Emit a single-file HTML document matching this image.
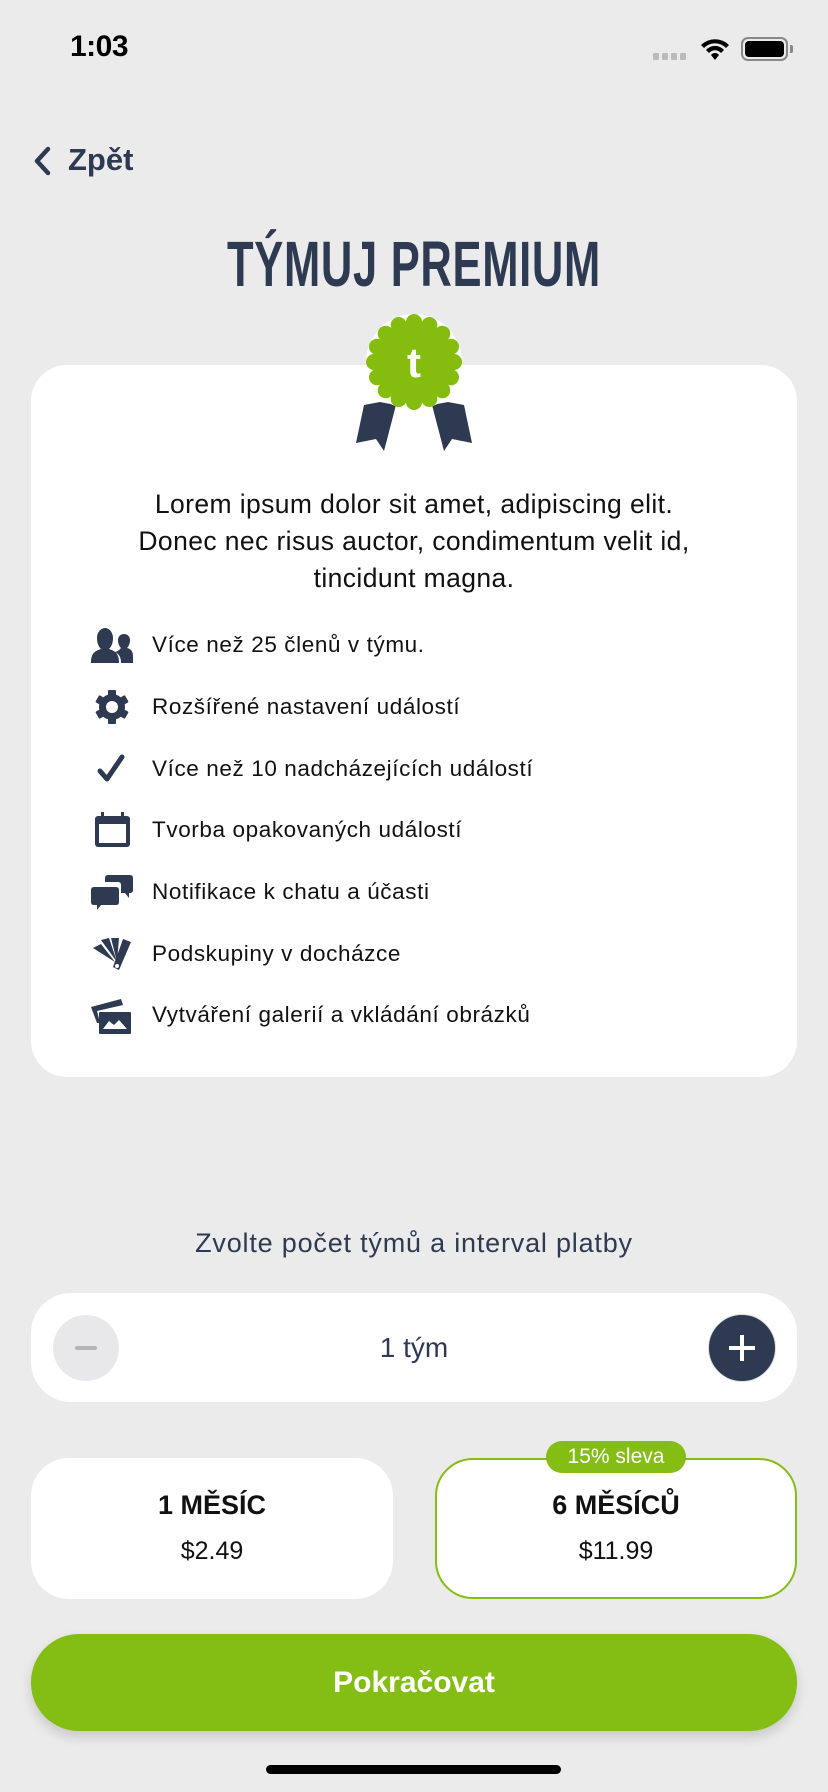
<!DOCTYPE html>
<html><head><meta charset="utf-8"><style>
*{margin:0;padding:0;box-sizing:border-box}
body{width:828px;height:1792px;background:#ebebeb;position:relative;overflow:hidden;font-family:"Liberation Sans",sans-serif;color:#000}
.abs{position:absolute}
.c{text-align:center}
.card{background:#fff;position:absolute}
.row{position:absolute;left:91px;height:40px;display:flex;align-items:center}
.row svg{width:42px;height:40px;flex:none}
.row span{margin-left:19px;font-size:22.5px;letter-spacing:0.6px;color:#111}
</style></head><body>
<div class="abs" style="left:70px;top:30px;font-size:30px;font-weight:bold;letter-spacing:-0.5px">1:03</div>
<div class="abs" style="left:653px;top:53px;display:flex;gap:3px"><i style="width:6px;height:7px;background:#bbb;border-radius:1px"></i><i style="width:6px;height:7px;background:#bbb;border-radius:1px"></i><i style="width:6px;height:7px;background:#bbb;border-radius:1px"></i><i style="width:6px;height:7px;background:#bbb;border-radius:1px"></i></div>
<svg class="abs" style="left:699px;top:36px" width="32" height="26" viewBox="0 0 32 26"><path d="M2 9a20 20 0 0 1 28 0l-3 3a15 15 0 0 0-22 0z M7 14a12 12 0 0 1 18 0l-3 3a8 8 0 0 0-12 0z M12 19a5 5 0 0 1 8 0l-4 5z" fill="#000"/></svg>
<div class="abs" style="left:741px;top:37px;width:47px;height:24px;border:2px solid #888;border-radius:7px;padding:2px"><div style="width:100%;height:100%;background:#000;border-radius:4px"></div></div>
<div class="abs" style="left:790px;top:45px;width:3px;height:8px;background:#888;border-radius:0 2px 2px 0"></div>

<svg class="abs" style="left:32px;top:146px" width="22" height="30" viewBox="0 0 22 30"><path d="M16 3 5 15l11 12" stroke="#2e3a52" stroke-width="4.5" fill="none" stroke-linecap="round" stroke-linejoin="round"/></svg>
<div class="abs" style="left:68px;top:142px;font-size:31px;font-weight:bold;color:#2e3a52">Zpět</div>

<div class="abs c" style="left:0;width:828px;top:228px;font-size:64px;font-weight:bold;color:#2e3a52;transform:scaleX(0.68);letter-spacing:1px;line-height:72px">TÝMUJ PREMIUM</div>

<div class="card" style="left:31px;top:365px;width:766px;height:712px;border-radius:36px"></div>

<svg class="abs" style="left:350px;top:305px" width="128" height="150" viewBox="0 0 128 150">
<path d="M14 100 30 97 46 100 34 146 26 134 6 138z" fill="#2e3a52"/>
<path d="M114 100 98 97 82 100 94 146 102 134 122 138z" fill="#2e3a52"/>
<circle cx="64" cy="57" r="48" fill="#fff"/>
<g fill="#84bd0e">
<circle cx="64" cy="57" r="38"/>
<circle cx="64" cy="17" r="8"/><circle cx="79.3" cy="20" r="8"/><circle cx="92.3" cy="28.7" r="8"/><circle cx="101" cy="41.7" r="8"/><circle cx="104" cy="57" r="8"/><circle cx="101" cy="72.3" r="8"/><circle cx="92.3" cy="85.3" r="8"/><circle cx="79.3" cy="94" r="8"/><circle cx="64" cy="97" r="8"/><circle cx="48.7" cy="94" r="8"/><circle cx="35.7" cy="85.3" r="8"/><circle cx="27" cy="72.3" r="8"/><circle cx="24" cy="57" r="8"/><circle cx="27" cy="41.7" r="8"/><circle cx="35.7" cy="28.7" r="8"/><circle cx="48.7" cy="20" r="8"/>
</g>
<text x="64" y="72" text-anchor="middle" font-family="Liberation Sans" font-weight="bold" font-size="42" fill="#fff">t</text>
</svg>

<div class="abs c" style="left:31px;width:766px;top:486px;font-size:26.5px;letter-spacing:0.4px;line-height:37px;color:#111">Lorem ipsum dolor sit amet, adipiscing elit.<br>Donec nec risus auctor, condimentum velit id,<br>tincidunt magna.</div>

<div class="row" style="top:625px"><svg viewBox="0 0 42 40"><path d="M0 38c0-10 4-12 10-14 -3-3-4-7-4-11 0-6 4-10 8-10s8 4 8 10c0 4-1 8-4 11 6 2 10 4 10 14z" fill="#2e3a52"/><path d="M30 38c0-6-2-9-6-11 4-1 5-3 6-4-2-2-3-5-3-8 0-4 3-6 6-6s6 2 6 6c0 3-1 6-3 8 4 1 6 3 6 9v6z" fill="#2e3a52"/></svg><span>Více než 25 členů v týmu.</span></div>
<div class="row" style="top:687px"><svg viewBox="0 0 42 40"><g transform="translate(21 20)" fill="#2e3a52"><circle r="13"/><rect x="-4" y="-17" width="8" height="34" rx="1"/><rect x="-4" y="-17" width="8" height="34" rx="1" transform="rotate(60)"/><rect x="-4" y="-17" width="8" height="34" rx="1" transform="rotate(120)"/></g><circle cx="21" cy="20" r="6" fill="#fff"/></svg><span>Rozšířené nastavení událostí</span></div>
<div class="row" style="top:749px"><svg viewBox="0 0 42 40"><path d="M9 22l7 8L31 8" stroke="#2e3a52" stroke-width="5" fill="none" stroke-linecap="round" stroke-linejoin="round"/></svg><span>Více než 10 nadcházejících událostí</span></div>
<div class="row" style="top:810px"><svg viewBox="0 0 42 40"><rect x="4" y="6" width="35" height="31" rx="3" fill="#2e3a52"/><rect x="8" y="14" width="27" height="19" fill="#fff"/><rect x="10" y="2" width="3" height="7" fill="#2e3a52"/><rect x="30" y="2" width="3" height="7" fill="#2e3a52"/></svg><span>Tvorba opakovaných událostí</span></div>
<div class="row" style="top:872px"><svg viewBox="0 0 42 40"><path d="M0 18q0-3 3-3h22q3 0 3 3v12q0 3-3 3H10l-4 5v-5H3q-3 0-3-3z" fill="#2e3a52"/><path d="M14 6q0-3 3-3h22q3 0 3 3v12q0 3-3 3h-1v5l-4-5h-4v-8q0-3-3-3H14z" fill="#2e3a52"/></svg><span>Notifikace k chatu a účasti</span></div>
<div class="row" style="top:934px"><svg viewBox="0 0 42 40"><path d="M2 14l8-4 14 18z M10 6l8-2 8 24z M20 4h8l-2 24z M32 5l8 3-12 28-6-3z" fill="#2e3a52"/><circle cx="26" cy="32" r="2" fill="#fff"/></svg><span>Podskupiny v docházce</span></div>
<div class="row" style="top:995px"><svg viewBox="0 0 42 40"><path d="M0 12l30-8 2 6L6 16l3 12H6z" fill="#2e3a52"/><rect x="8" y="17" width="32" height="22" rx="1" fill="#2e3a52"/><path d="M12 34l6-8 5 4 5-5 8 9z" fill="#fff"/></svg><span>Vytváření galerií a vkládání obrázků</span></div>

<div class="abs c" style="left:0;width:828px;top:1228px;font-size:27px;letter-spacing:0.8px;color:#2e3a52">Zvolte počet týmů a interval platby</div>

<div class="card" style="left:31px;top:1293px;width:766px;height:109px;border-radius:40px"></div>
<div class="abs" style="left:53px;top:1315px;width:66px;height:66px;border-radius:50%;background:#e8e8ea"></div>
<div class="abs" style="left:75px;top:1346px;width:22px;height:4px;background:#b5b5b5;border-radius:2px"></div>
<div class="abs c" style="left:31px;width:766px;top:1332px;font-size:28px;color:#2e3a52">1 tým</div>
<div class="abs" style="left:708px;top:1314px;width:68px;height:68px;border-radius:50%;background:#2e3a52;border:1px solid #ddd"></div>
<div class="abs" style="left:729px;top:1346px;width:26px;height:4px;background:#fff"></div>
<div class="abs" style="left:740px;top:1335px;width:4px;height:26px;background:#fff"></div>

<div class="card" style="left:31px;top:1458px;width:362px;height:141px;border-radius:38px"></div>
<div class="card" style="left:435px;top:1458px;width:362px;height:141px;border-radius:38px;border:2px solid #84bd13"></div>
<div class="abs c" style="left:31px;width:362px;top:1490px;font-size:27px;font-weight:bold;color:#111">1 MĚSÍC</div>
<div class="abs c" style="left:31px;width:362px;top:1537px;font-size:25px;color:#111">$2.49</div>
<div class="abs c" style="left:435px;width:362px;top:1490px;font-size:27px;font-weight:bold;color:#111">6 MĚSÍCŮ</div>
<div class="abs c" style="left:435px;width:362px;top:1537px;font-size:25px;color:#111">$11.99</div>
<div class="abs c" style="left:546px;top:1441px;width:140px;height:32px;border-radius:16px;background:#84bd13;color:#fff;font-size:21px;line-height:32px">15% sleva</div>

<div class="abs c" style="left:31px;top:1634px;width:766px;height:97px;border-radius:48px;background:#84bd13;color:#fff;font-size:30px;font-weight:bold;line-height:97px;box-shadow:0 6px 12px rgba(0,0,0,0.15)">Pokračovat</div>

<div class="abs" style="left:266px;top:1765px;width:295px;height:9px;border-radius:5px;background:#000"></div>
</body></html>
